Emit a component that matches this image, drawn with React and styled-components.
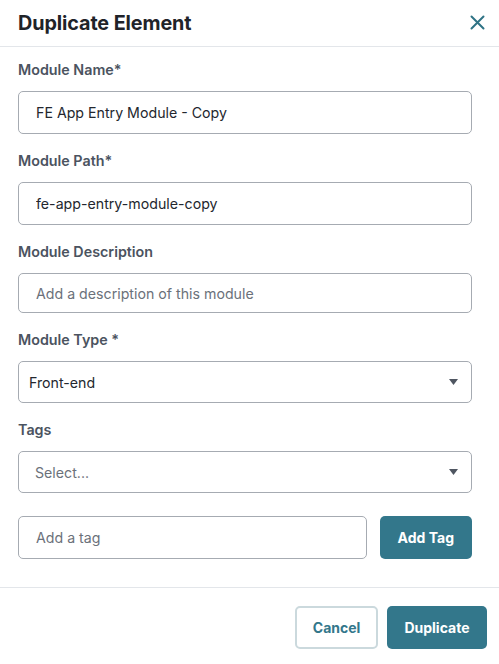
import React from "react";
import styled, { createGlobalStyle } from "styled-components";

const Global = createGlobalStyle`
  html, body { margin: 0; padding: 0; background: #ffffff; }
  body { font-family: Inter, "Noto Sans", "Liberation Sans", sans-serif; -webkit-font-smoothing: antialiased; }
  * { box-sizing: border-box; }
`;

const Dialog = styled.div`
  width: 499px;
  height: 664px;
  background: #fff;
  display: flex;
  flex-direction: column;
`;

const Header = styled.header`
  height: 47px;
  display: flex;
  align-items: center;
  justify-content: space-between;
  padding: 0 14px 1px 18px;
  border-bottom: 1px solid #e3e6ea;
`;

const Title = styled.h2`
  margin: 0;
  font-size: 19.8px;
  font-weight: 700;
  color: #1f2329;
  letter-spacing: -0.1px;
`;

const CloseButton = styled.button`
  border: 0;
  background: none;
  padding: 0;
  width: 16px;
  height: 16px;
  display: flex;
  align-items: center;
  justify-content: center;
  color: #2f7385;
  cursor: pointer;
`;

const Body = styled.div`
  padding: 13px 27px 0 18px;
  display: flex;
  flex-direction: column;
`;

const Field = styled.div`
  display: flex;
  flex-direction: column;
  margin-bottom: 17px;
`;

const Label = styled.label`
  font-size: 14.3px;
  line-height: 20px;
  font-weight: 600;
  color: #4b5360;
  margin-bottom: 11px;
`;

const TextInput = styled.input`
  height: ${(p) => p.$h || 43}px;
  width: 100%;
  border: 1px solid #a6abb2;
  border-radius: 5px;
  padding: 0 ${(p) => p.$pad || 17}px;
  font-family: inherit;
  font-size: 14.2px;
  color: #23272e;
  background: #fff;
  outline: none;
  &::placeholder { color: #6b717a; }
`;

const SelectBox = styled.div`
  height: 42px;
  width: 100%;
  border: 1px solid #a6abb2;
  border-radius: 5px;
  padding: 0 13px 0 ${(p) => p.$pad || 10}px;
  display: flex;
  align-items: center;
  justify-content: space-between;
  font-size: 14.2px;
  color: ${(p) => (p.$placeholder ? "#6b717a" : "#23272e")};
`;

const Row = styled.div`
  display: flex;
  gap: 13px;
  margin-top: 6px;
`;

const PrimaryButton = styled.button`
  height: 43px;
  padding: 0 ${(p) => p.$px || 18}px;
  border: 0;
  border-radius: 5px;
  background: #33778b;
  color: #fff;
  font-family: inherit;
  font-size: 14px;
  font-weight: 700;
  white-space: nowrap;
  flex-shrink: 0;
`;

const SecondaryButton = styled.button`
  height: 43px;
  padding: 0 15.5px;
  border: 2px solid #cbd9dd;
  border-radius: 5px;
  background: #fff;
  color: #33778b;
  font-family: inherit;
  font-size: 14px;
  font-weight: 700;
`;

const Footer = styled.footer`
  margin-top: 28px;
  border-top: 1px solid #e3e6ea;
  padding: 18px 12px 0 0;
  display: flex;
  justify-content: flex-end;
  gap: 9px;
`;

const Arrow = () => (
  <svg width="9" height="6" viewBox="0 0 9 6">
    <path d="M0 0 H9 L4.5 6 Z" fill="#4f5661" />
  </svg>
);

export default function App() {
  return (
    <>
      <Global />
      <Dialog>
        <Header>
          <Title>Duplicate Element</Title>
          <CloseButton aria-label="Close">
            <svg width="15" height="15" viewBox="0 0 15 15">
              <path d="M1.5 1.5 L13.5 13.5 M13.5 1.5 L1.5 13.5" stroke="currentColor" strokeWidth="2" strokeLinecap="round" />
            </svg>
          </CloseButton>
        </Header>
        <Body>
          <Field>
            <Label>Module Name*</Label>
            <TextInput defaultValue="FE App Entry Module - Copy" />
          </Field>
          <Field>
            <Label>Module Path*</Label>
            <TextInput defaultValue="fe-app-entry-module-copy" />
          </Field>
          <Field>
            <Label>Module Description</Label>
            <TextInput $h={40} placeholder="Add a description of this module" />
          </Field>
          <Field>
            <Label>Module Type *</Label>
            <SelectBox>
              <span>Front-end</span>
              <Arrow />
            </SelectBox>
          </Field>
          <Field>
            <Label>Tags</Label>
            <SelectBox $pad={16} $placeholder>
              <span>Select...</span>
              <Arrow />
            </SelectBox>
          </Field>
          <Row>
            <TextInput placeholder="Add a tag" />
            <PrimaryButton $px={18}>Add Tag</PrimaryButton>
          </Row>
        </Body>
        <Footer>
          <SecondaryButton>Cancel</SecondaryButton>
          <PrimaryButton $px={17.5}>Duplicate</PrimaryButton>
        </Footer>
      </Dialog>
    </>
  );
}
